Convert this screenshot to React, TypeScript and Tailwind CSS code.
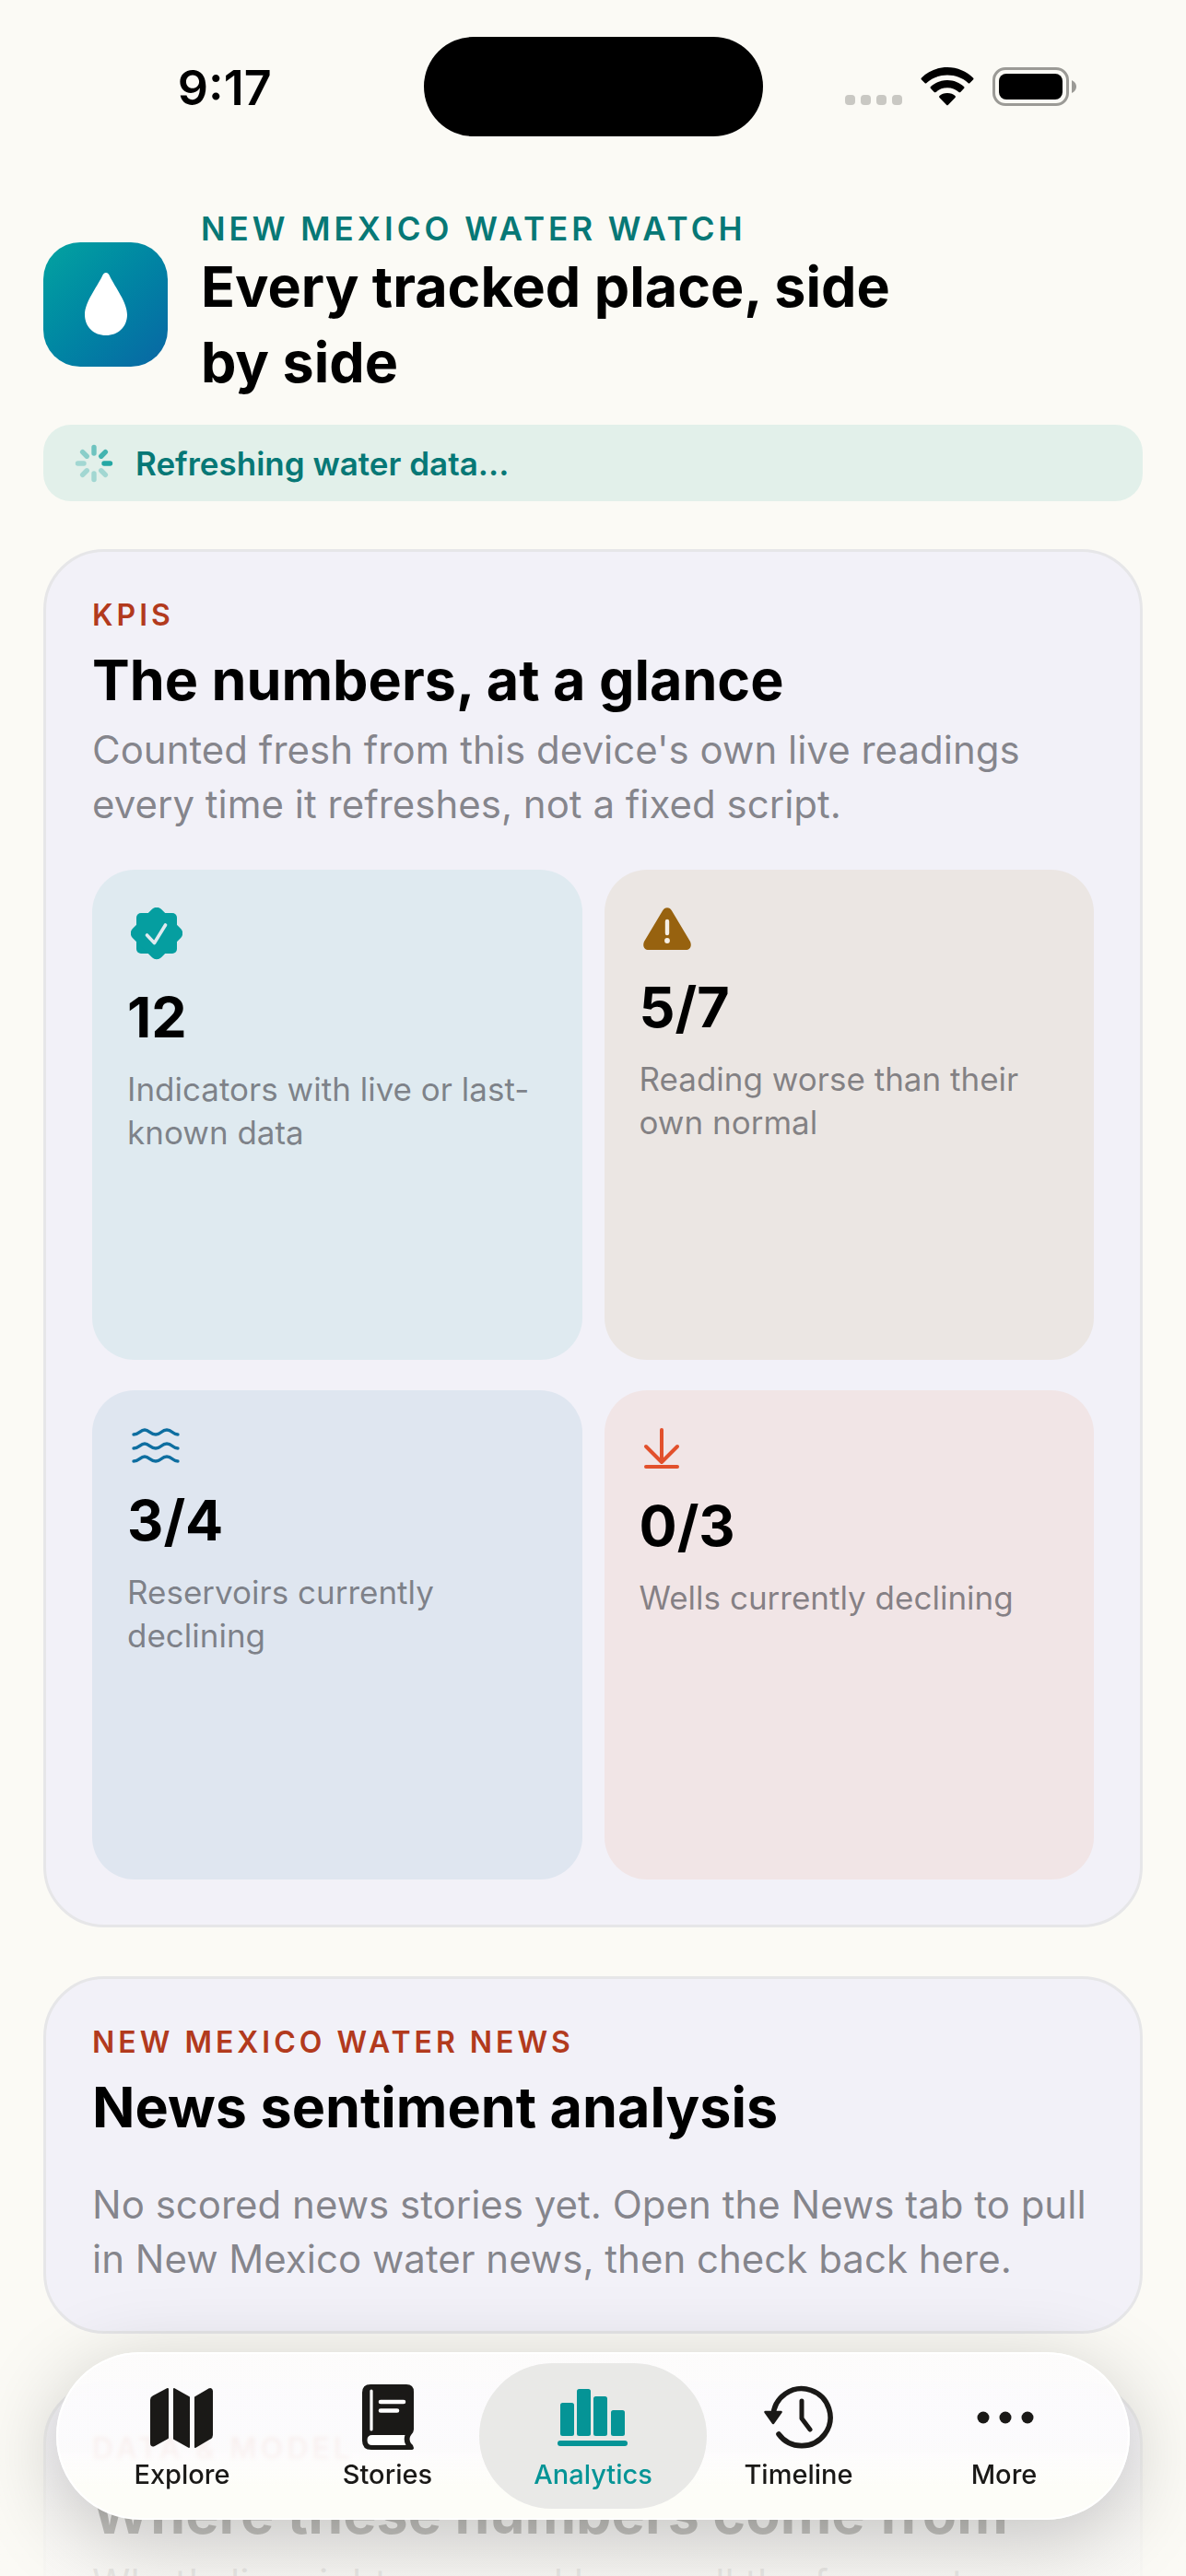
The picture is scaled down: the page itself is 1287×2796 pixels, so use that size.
import type { ReactNode } from 'react'
import clsx from 'clsx'

interface Kpi {
  value: string
  label: string
  tint: string
  icon: ReactNode
}

interface Tab {
  label: string
  icon: ReactNode
}

function SealIcon() {
  return (
    <svg className="block w-14 h-[57px]" viewBox="0 0 56 57" aria-hidden="true">
      <rect x="6" y="6" width="44" height="44" rx="5" fill="#059ea0" />
      <rect x="6" y="6" width="44" height="44" rx="7" fill="#059ea0" transform="rotate(45 28 28)" />
      <path d="M17.5 30 25.5 38.5 37.5 19" fill="none" stroke="#dfeaf0" strokeWidth="3.6" strokeLinecap="round" strokeLinejoin="round" />
    </svg>
  )
}

function WarningIcon() {
  return (
    <svg className="block w-[52px] h-[46px]" viewBox="0 0 52 46" aria-hidden="true">
      <path d="M21 3.5C23-1 29-1 31 3.500L51 37C53 41.500 51 46 46 46H6C1 46-1 41.500 1 37Z" fill="#97620f" />
      <path d="M26 15V28" stroke="#f5efe6" strokeWidth="4.400" strokeLinecap="round" />
      <circle cx="26" cy="36" r="2.900" fill="#f5efe6" />
    </svg>
  )
}

function WavesIcon() {
  return (
    <svg className="block w-14 h-[38px]" viewBox="0 2 56 38" aria-hidden="true">
      <g fill="none" stroke="#0e6ea0" strokeWidth="3.4" strokeLinecap="round" strokeLinejoin="round">
        <path d="M3 9C9 9 10 4 15 4S21 9 27 9 33 4 39 4 45 9 51 9" />
        <path d="M3 24C9 24 10 19 15 19S21 24 27 24 33 19 39 19 45 24 51 24" />
        <path d="M3 38C9 38 10 33 15 33S21 38 27 38 33 33 39 33 45 38 51 38" />
      </g>
    </svg>
  )
}

function ArrowDownIcon() {
  return (
    <svg className="block w-10 h-11" viewBox="0 0 40 44" aria-hidden="true">
      <path d="M20 2V36M3 20 20 37 37 20M3 42H37" fill="none" stroke="#e2502c" strokeWidth="4" strokeLinecap="round" strokeLinejoin="round" />
    </svg>
  )
}

const KPIS: Kpi[] = [
  { value: '12', label: 'Indicators with live or last-known data', tint: 'bg-[#dfeaf0]', icon: <SealIcon /> },
  { value: '5/7', label: 'Reading worse than their own normal', tint: 'bg-[#ebe6e3]', icon: <WarningIcon /> },
  { value: '3/4', label: 'Reservoirs currently declining', tint: 'bg-[#dfe6f0]', icon: <WavesIcon /> },
  { value: '0/3', label: 'Wells currently declining', tint: 'bg-[#f1e5e6]', icon: <ArrowDownIcon /> },
]

const TABS: Tab[] = [
  {
    label: 'Explore',
    icon: (
      <g fill="currentColor" stroke="currentColor" strokeWidth="2" strokeLinejoin="round">
        <path d="M5 18Q5 15.500 7 14.500L23 6V59L8.500 67Q5 68.500 5 65Z" />
        <path d="M30 6 46 15V69L30 60Z" />
        <path d="M53 15 67.500 6.500Q71 5 71 8.500V56Q71 58.500 69 59.500L53 69Z" />
      </g>
    ),
  },
  {
    label: 'Stories',
    icon: (
      <>
        <path d="M20 1H59Q67 1 67 9V50Q67 53 64 56 61 60 64 65 67 67 67 70 67 72 64 72H21Q11 72 11 62V10Q11 1 20 1Z" fill="currentColor" />
        <path d="M21 8V50" stroke="#fff" strokeWidth="3.200" strokeLinecap="round" />
        <path d="M31 20H56M31 29.500H49" stroke="#fff" strokeWidth="4.600" strokeLinecap="round" />
        <path d="M22 56H57.500Q55.500 61.500 58.500 67H22Q16.500 67 16.500 61.500T22 56Z" fill="#fff" />
      </>
    ),
  },
  {
    label: 'Analytics',
    icon: (
      <g fill="currentColor">
        <rect x="3" y="21" width="15" height="36" rx="2.500" />
        <rect x="21" y="6" width="15" height="51" rx="2.500" />
        <rect x="39" y="14" width="15" height="43" rx="2.500" />
        <rect x="58" y="29" width="15" height="28" rx="2.500" />
        <rect x="0" y="62" width="76" height="6" rx="3" />
      </g>
    ),
  },
  {
    label: 'Timeline',
    icon: (
      <>
        <path d="M11 36A31 31 0 1 1 17 55" fill="none" stroke="currentColor" strokeWidth="5.600" strokeLinecap="round" />
        <path d="M2.500 31H19.500L11 43Z" fill="currentColor" stroke="currentColor" strokeWidth="2.600" strokeLinejoin="round" />
        <path d="M42 19V38L51 50" fill="none" stroke="currentColor" strokeWidth="5" strokeLinecap="round" strokeLinejoin="round" />
      </>
    ),
  },
  {
    label: 'More',
    icon: (
      <g fill="currentColor">
        <circle cx="16" cy="37" r="6.500" />
        <circle cx="40" cy="37" r="6.500" />
        <circle cx="64" cy="37" r="6.500" />
      </g>
    ),
  },
]

function StatusBar() {
  return (
    <div className="grid grid-cols-[1fr_368px_1fr] items-center pt-10">
      <div className="text-center text-[52px] leading-[60px] font-semibold pl-7 pt-1">9:17</div>
      <div className="h-[108px] rounded-full bg-black" />
      <div className="flex items-center justify-center gap-5 pr-7">
        <div className="flex gap-1.5 self-end pb-px">
          {[0, 1, 2, 3].map((i) => (
            <span key={i} className="w-[11px] h-[11px] rounded-sm bg-[#c9c8c3]" />
          ))}
        </div>
        <svg className="w-[58px] h-[42px]" viewBox="0 0 58 42" aria-label="Wi-Fi">
          <path d="M29 0C18 0 8 4.500 1 11.500Q0 12.500 1 13.500L4.500 17Q5.500 18 6.500 17C12.500 11.500 20 8.500 29 8.500S45.500 11.500 51.500 17Q52.500 18 53.500 17L57 13.500Q58 12.500 57 11.500C50 4.500 40 0 29 0Z" />
          <path d="M29 14C22 14 15.500 16.800 11 21Q10 22 11 23L14.500 26.800Q15.500 27.800 16.500 27C20 24 24 22.300 29 22.300S38 24 41.500 27Q42.500 27.800 43.500 26.800L47 23Q48 22 47 21C42.500 16.800 36 14 29 14Z" />
          <path d="M29 28C25.500 28 22.500 29 20.500 31Q19.500 32 20.500 33L28 40.800Q29 41.800 30 40.800L37.500 33Q38.500 32 37.500 31C35.500 29 32.500 28 29 28Z" />
        </svg>
        <svg className="w-[92px] h-[42px]" viewBox="0 0 92 42" aria-label="Battery">
          <rect x="1.500" y="1.500" width="80" height="39" rx="12.500" fill="none" stroke="#9b9a96" strokeWidth="3" />
          <rect x="7" y="7" width="69" height="28" rx="8" />
          <path d="M86 14Q91 16.500 91 21T86 28Z" fill="#9b9a96" />
        </svg>
      </div>
    </div>
  )
}

function Header() {
  return (
    <header className="flex items-center gap-9 mt-[78px]">
      <div className="flex items-center justify-center w-[135px] h-[135px] shrink-0 rounded-[40px] bg-linear-to-br from-[#05a3a0] to-[#0a66a4]">
        <svg className="w-[46px] h-[68px]" viewBox="0 0 46 68" aria-hidden="true">
          <path d="M23 0C25 0 26 1.500 27 3.500 33 16 46 32 46 45.500 46 59 36 68 23 68S0 59 0 45.500C0 32 13 16 19 3.500 20 1.500 21 0 23 0Z" fill="#fff" />
        </svg>
      </div>
      <div className="max-w-[800px]">
        <p className="text-[35px] leading-[44px] font-semibold tracking-[4px] text-[#077876]">NEW MEXICO WATER WATCH</p>
        <h1 className="text-[61px] leading-[82px] font-bold">Every tracked place, side by side</h1>
      </div>
    </header>
  )
}

function Spinner() {
  // one opacity for each blade, clockwise from the top
  const blades = [0.55, 0.75, 0.9, 0.3, 0.3, 0.3, 0.3, 0.42]
  return (
    <svg className="w-[42px] h-[42px]" viewBox="0 0 42 42" aria-hidden="true">
      {blades.map((opacity, i) => (
        <path key={i} d="M21 3.500V10" stroke="#10a09d" strokeWidth="5.400" strokeLinecap="round" opacity={opacity} transform={`rotate(${i * 45} 21 21)`} />
      ))}
    </svg>
  )
}

interface CardProps {
  eyebrow: string
  title: string
  children: ReactNode
}

function Card({ eyebrow, title, children }: CardProps) {
  return (
    <section className="rounded-[66px] border-[3px] border-[#e6e6e8] bg-[#f2f1f8] px-[50px] py-[49px]">
      <p className="text-[32px] leading-[40px] font-semibold tracking-[4px] text-[#b23a1d]">{eyebrow}</p>
      <h2 className="mt-2.5 text-[61px] leading-[80px] font-bold">{title}</h2>
      {children}
    </section>
  )
}

function KpiTile({ value, label, tint, icon }: Kpi) {
  return (
    <div className={clsx('aspect-square rounded-[46px] px-[38px] pt-[41px]', tint)}>
      <div className="pl-1">{icon}</div>
      <p className="mt-[23px] text-[61px] leading-[78px] font-bold">{value}</p>
      <p className="mt-4 text-[35px] leading-[47px] text-[#3c3c43]/60">{label}</p>
    </div>
  )
}

function TabBar() {
  return (
    <nav className="absolute inset-x-[61px] bottom-[61px] flex rounded-full border-2 border-white bg-linear-to-b from-[#fdfcfd]/90 from-60% to-[#fdfdf8] to-80% px-[23px] py-2.5 backdrop-blur-[2px] shadow-[0_20px_90px_rgba(0,0,0,0.22)]">
      {TABS.map((tab) => {
        const active = tab.label === 'Analytics'
        return (
          <button
            key={tab.label}
            type="button"
            aria-current={active ? 'page' : undefined}
            className={clsx('relative flex flex-1 flex-col items-center pt-[22px] pb-[19px]', active ? 'text-[#059496]' : 'text-[#1a1917]')}
          >
            {active && <span className="absolute inset-y-0 -inset-x-3 rounded-full bg-[#e9e9e7]" />}
            <svg className="relative w-[78px] h-[74px]" viewBox="0 0 78 74" aria-hidden="true">
              {tab.icon}
            </svg>
            <span className="relative mt-[7px] text-[29px] leading-9 font-medium">{tab.label}</span>
          </button>
        )
      })}
    </nav>
  )
}

export default function App() {
  return (
    <div className="relative h-screen overflow-hidden bg-[#fbfaf5] text-black font-['Inter','Liberation_Sans',sans-serif]">
      <div className="h-full overflow-y-auto [scrollbar-width:none]">
        <StatusBar />
        <main className="px-[47px]">
          <Header />
          <div role="status" className="flex items-center gap-6 mt-[27px] mb-[52px] h-[83px] rounded-[30px] bg-[#e2f0ea] px-[34px]">
            <Spinner />
            <span className="text-[35px] leading-[44px] font-semibold text-[#077876]">Refreshing water data...</span>
          </div>
          <div className="flex flex-col gap-[53px]">
            <Card eyebrow="KPIS" title="The numbers, at a glance">
              <p className="mt-1.5 text-[42px] leading-[59px] text-[#3c3c43]/60">
                Counted fresh from this device's own live readings every time it refreshes, not a fixed script.
              </p>
              <div className="grid grid-cols-2 gap-x-6 gap-y-[33px] mt-[42px]">
                {KPIS.map((kpi) => (
                  <KpiTile key={kpi.value} {...kpi} />
                ))}
              </div>
            </Card>
            <Card eyebrow="NEW MEXICO WATER NEWS" title="News sentiment analysis">
              <p className="mt-9 text-[42px] leading-[59px] text-[#3c3c43]/60">
                No scored news stories yet. Open the News tab to pull in New Mexico water news, then check back here.
              </p>
            </Card>
            <Card eyebrow="DATA & MODEL" title="Where these numbers come from">
              <p className="mt-1.5 text-[42px] leading-[59px] text-[#3c3c43]/60">
                What's live right now, and how well the forecasts
              </p>
            </Card>
          </div>
        </main>
      </div>
      <div className="pointer-events-none absolute inset-x-0 bottom-0 h-[240px] bg-linear-to-b from-[#fbfaf5]/0 via-[#fbfaf5]/75 via-70% to-[#fbfaf5]/85" />
      <TabBar />
    </div>
  )
}
